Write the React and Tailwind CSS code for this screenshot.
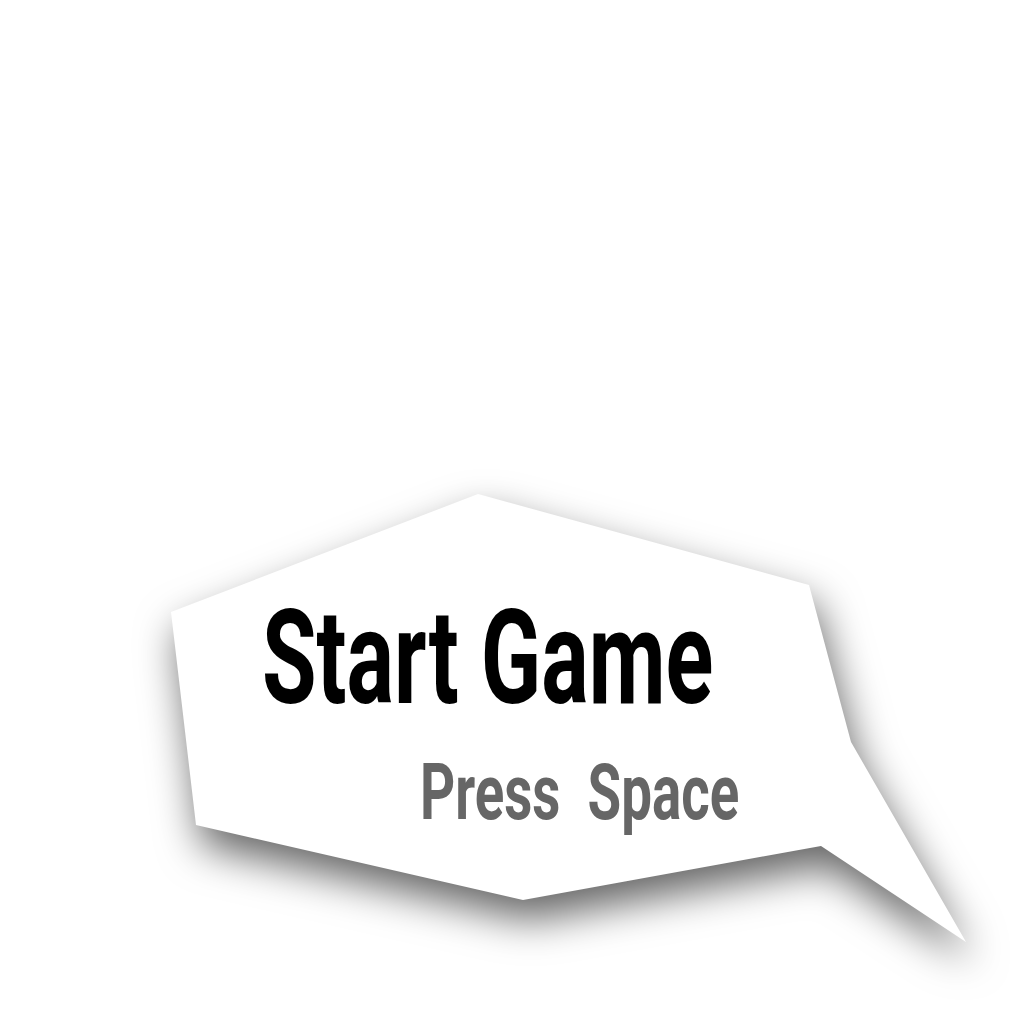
import React from 'react';

// speech bubble outline, coords relative to the bubble box (795x448)
const BUBBLE_POINTS = '307,0 638,91 680,248 795,448 650,352 352,406 25,331 0,118';

export default function App() {
  return (
    <div className="w-full h-[1024px] bg-white overflow-hidden pt-[494px] pl-[171px]">
      <div className="relative w-[795px] h-[448px]">
        <svg
          className="absolute inset-0 overflow-visible drop-shadow-[6px_20px_20px_rgba(0,0,0,0.6)]"
          width="795"
          height="448"
          viewBox="0 0 795 448"
        >
          <polygon points={BUBBLE_POINTS} fill="#ffffff" />
        </svg>

        <div className="relative flex flex-col pt-[99px] font-['Roboto',sans-serif] font-bold">
          <div className="pl-[91px]">
            <p className="origin-left scale-x-[0.677] text-[131px] leading-none text-black whitespace-pre">
              Start Game
            </p>
          </div>
          <div className="pl-[249px] mt-[31px]">
            <p className="origin-left scale-x-[0.71] text-[77px] leading-none text-[#666666] whitespace-pre">
              Press  Space
            </p>
          </div>
        </div>
      </div>
    </div>
  );
}
